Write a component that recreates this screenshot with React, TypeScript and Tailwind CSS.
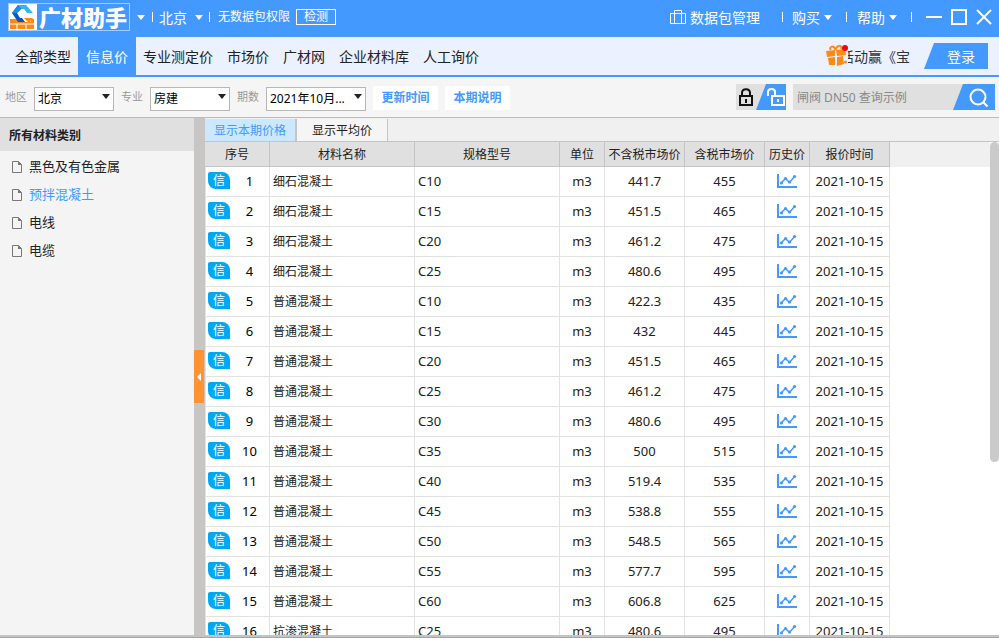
import clsx from "clsx";

interface Material {
  name: string;
  spec: string;
  net: string;
  gross: string;
}

const navItems = ["全部类型", "信息价", "专业测定价", "市场价", "广材网", "企业材料库", "人工询价"];

const categories = ["黑色及有色金属", "预拌混凝土", "电线", "电缆"];

const columns = [
  { title: "序号", width: "w-[65px]" },
  { title: "材料名称", width: "w-[145px]" },
  { title: "规格型号", width: "w-[145px]" },
  { title: "单位", width: "w-[45px]" },
  { title: "不含税市场价", width: "w-[80px]" },
  { title: "含税市场价", width: "w-[80px]" },
  { title: "历史价", width: "w-[45px]" },
  { title: "报价时间", width: "w-[80px]" },
];

const materials: Material[] = [
  { name: "细石混凝土", spec: "C10", net: "441.7", gross: "455" },
  { name: "细石混凝土", spec: "C15", net: "451.5", gross: "465" },
  { name: "细石混凝土", spec: "C20", net: "461.2", gross: "475" },
  { name: "细石混凝土", spec: "C25", net: "480.6", gross: "495" },
  { name: "普通混凝土", spec: "C10", net: "422.3", gross: "435" },
  { name: "普通混凝土", spec: "C15", net: "432", gross: "445" },
  { name: "普通混凝土", spec: "C20", net: "451.5", gross: "465" },
  { name: "普通混凝土", spec: "C25", net: "461.2", gross: "475" },
  { name: "普通混凝土", spec: "C30", net: "480.6", gross: "495" },
  { name: "普通混凝土", spec: "C35", net: "500", gross: "515" },
  { name: "普通混凝土", spec: "C40", net: "519.4", gross: "535" },
  { name: "普通混凝土", spec: "C45", net: "538.8", gross: "555" },
  { name: "普通混凝土", spec: "C50", net: "548.5", gross: "565" },
  { name: "普通混凝土", spec: "C55", net: "577.7", gross: "595" },
  { name: "普通混凝土", spec: "C60", net: "606.8", gross: "625" },
  { name: "抗渗混凝土", spec: "C25", net: "480.6", gross: "495" },
];

function Caret({ className }: { className?: string }) {
  return (
    <svg className={clsx("h-[5px] w-2 shrink-0", className)} viewBox="0 0 8 5" aria-hidden="true">
      <path d="M0 0h8L4 5z" fill="currentColor" />
    </svg>
  );
}

function Divider() {
  return <span className="h-[10px] w-px shrink-0 bg-white" />;
}

function LogoMark() {
  return (
    <svg className="h-[26px] w-7 shrink-0 bg-white" viewBox="0 0 28 26" aria-hidden="true">
      <path d="M1 15h24v10H1z" fill="#fb8a12" />
      <path d="M1 20h25M8 20v5M17 20v5" stroke="#fff" />
      <path d="M8 6h9l5 6v6h-8l-7-5z" fill="#fff" />
      <path d="M9 1h8l7 8h-6l-3-4h-4z" fill="#2fb8f5" />
      <path d="M9 1 3 9l6 9h7l-3-4h-2l-3-5 4-4z" fill="#0c55c4" />
      <path d="M9 1 3 9h5l4-4z" fill="#1c8cf0" />
      <path d="M15 14h9l-4 5z" fill="#fb8a12" />
    </svg>
  );
}

function BriefcaseIcon() {
  return (
    <svg className="h-4 w-4" viewBox="0 0 16 16" fill="none" stroke="currentColor" aria-hidden="true">
      <path d="M.5 4.500h15v10H.5zM4.500 14.500v-13h7v13" />
    </svg>
  );
}

function GiftIcon() {
  return (
    <svg className="h-[22px] w-[22px] shrink-0" viewBox="0 0 22 22" aria-hidden="true">
      <g fill="#ff8b17">
        <path d="M0 6 9 5v6l-8 1zM10 5l9-1 1 6-9 1zM2 13l7-1v8l-6 0zM11 12l6-1 1 8-7 2z" />
        <circle cx="19.500" cy="17" r="1.500" />
      </g>
      <path d="M9.500 5C8 0 3 1 4.500 5M9.500 5c2-6 7-5 5.500-1" fill="none" stroke="#ff8b17" strokeWidth="2" />
      <circle cx="19" cy="3" r="3" fill="#f00" />
    </svg>
  );
}

function FileIcon() {
  return (
    <svg className="h-3 w-[11px] shrink-0" viewBox="0 0 11 12" aria-hidden="true">
      <path d="M.5.5h6l3 3v8h-9z" fill="none" stroke="#777" />
      <path d="M6 0v4h4z" fill="#777" />
    </svg>
  );
}

function ChartIcon() {
  return (
    <svg className="h-[15px] w-5" viewBox="0 0 20 15" fill="none" stroke="#4499ff" aria-hidden="true">
      <path d="M1 0v13h19" strokeWidth="2" />
      <path d="M4 9 8.500 4.500l4 4L18 2" strokeWidth="1.500" />
      <g fill="#4499ff" stroke="none">
        <circle cx="4.500" cy="9" r="1.600" />
        <circle cx="8.500" cy="4.500" r="1.600" />
        <circle cx="12.500" cy="8" r="1.600" />
        <circle cx="17.500" cy="2.500" r="1.600" />
      </g>
    </svg>
  );
}

function TitleBar() {
  return (
    <header className="flex h-[37px] shrink-0 items-center justify-between bg-[#4499ff] pb-[3px] text-white">
      <div className="flex items-center pl-2">
        <div className="flex items-center border border-white/50">
          <LogoMark />
          <span className="w-[92px] text-center text-[22px] leading-6 font-black">广材助手</span>
        </div>
        <Caret className="mx-[7px]" />
        <Divider />
        <button className="flex items-center gap-2 px-[6px] text-[14px]">
          北京
          <Caret />
        </button>
        <Divider />
        <span className="pl-2 text-[12px]">无数据包权限</span>
        <button className="ml-[6px] h-4 w-10 border border-white text-[12px] leading-3">检测</button>
      </div>
      <div className="flex items-center pr-[7px] text-[14px]">
        <button className="flex items-center gap-1">
          <BriefcaseIcon />
          数据包管理
        </button>
        <span className="w-[22px]" />
        <Divider />
        <button className="flex items-center gap-1 pr-[10px] pl-[9px]">
          购买
          <Caret />
        </button>
        <span className="w-1" />
        <Divider />
        <button className="flex items-center gap-1 px-[10px]">
          帮助
          <Caret />
        </button>
        <span className="w-1" />
        <Divider />
        <div className="flex items-center gap-[9px] pl-[14px]">
          <button aria-label="最小化">
            <svg className="h-4 w-4" viewBox="0 0 16 16">
              <path d="M0 8h16" stroke="#fff" strokeWidth="2" />
            </svg>
          </button>
          <button aria-label="最大化">
            <svg className="h-4 w-4" viewBox="0 0 16 16">
              <path d="M1 1h14v14H1z" fill="none" stroke="#fff" strokeWidth="2" />
            </svg>
          </button>
          <button aria-label="关闭">
            <svg className="h-4 w-4" viewBox="0 0 16 16">
              <path d="m1 1 14 14M15 1 1 15" stroke="#fff" strokeWidth="2" />
            </svg>
          </button>
        </div>
      </div>
    </header>
  );
}

function NavBar() {
  return (
    <nav className="flex h-10 shrink-0 justify-between border-b-2 border-[#4499ff] bg-[#ebf1ff]">
      <div className="flex pl-2 text-[14px]">
        {navItems.map((item) => (
          <a
            key={item}
            href="#"
            className={clsx(
              "flex items-center pt-px",
              item === "信息价" ? "bg-[#4499ff] px-2 text-white" : "px-[7px] text-[#222]",
            )}
          >
            {item}
          </a>
        ))}
      </div>
      <div className="flex items-center pr-[11px]">
        <GiftIcon />
        <a href="#" className="flex w-[62px] justify-end overflow-hidden text-[14px] whitespace-nowrap text-[#333]">
          活动赢《宝
        </a>
        <button className="ml-[14px] h-[26px] w-16 bg-[#4499ff] pl-[10px] text-[14px] text-white [clip-path:polygon(10px_0,100%_0,100%_100%,0_100%)]">
          登录
        </button>
      </div>
    </nav>
  );
}

interface FilterProps {
  id: string;
  label: string;
  value: string;
  width: string;
}

function Filter({ id, label, value, width }: FilterProps) {
  return (
    <div className="flex items-center gap-[7px]">
      <label htmlFor={id} className="text-[11px] text-[#999]">
        {label}
      </label>
      <div className={clsx("relative", width)}>
        <select id={id} className="h-6 w-full appearance-none border border-[#b8b8b8] bg-white pl-[3px] text-[12px] text-black">
          <option>{value}</option>
        </select>
        <Caret className="pointer-events-none absolute top-[9px] right-1 text-[#222]" />
      </div>
    </div>
  );
}

function Toolbar() {
  return (
    <div className="flex h-[41px] shrink-0 items-center justify-between border-b border-[#bbb] bg-[#f5f5f5] pr-1 pl-[5px]">
      <div className="flex items-center gap-[7px] pt-px">
        <Filter id="region" label="地区" value="北京" width="w-20" />
        <Filter id="major" label="专业" value="房建" width="w-20" />
        <Filter id="period" label="期数" value="2021年10月..." width="w-[100px]" />
        <button className="h-6 w-[65px] bg-white text-[12px] font-bold text-[#4499ff]">更新时间</button>
        <button className="h-6 w-[65px] bg-white text-[12px] font-bold text-[#4499ff]">本期说明</button>
      </div>
      <div className="flex items-center gap-[7px]">
        <button aria-label="锁定">
          <svg className="h-[26px] w-[50px] bg-[#e0e0e0]" viewBox="0 0 50 26">
            <path d="M30 0h20v26H20z" fill="#4499ff" />
            <g fill="none" stroke="#111" strokeWidth="2">
              <path d="M4 12h12v9H4z" />
              <path d="M6 12V9c0-5 8-5 8 0v3M10 15v4" />
            </g>
            <g fill="none" stroke="#fff" strokeWidth="2">
              <path d="M36 12h12v9H36z" />
              <path d="M32 12V8c0-4 7-4 7 0v4M42 15v3" />
            </g>
          </svg>
        </button>
        <div className="flex h-[26px]">
          <input
            aria-label="查询材料"
            placeholder="闸阀 DN50 查询示例"
            className="w-[160px] bg-[#e0e0e0] pt-px pl-1 text-[12px] placeholder:text-[#888]"
          />
          <button aria-label="查询" className="bg-[#e0e0e0]">
            <svg className="h-[26px] w-[42px]" viewBox="0 0 42 26" fill="none">
              <path d="M10 0h32v26H0z" fill="#4499ff" />
              <circle cx="25" cy="13" r="7.500" stroke="#fff" strokeWidth="2" />
              <path d="m30.500 18.500 4 4" stroke="#fff" strokeWidth="2" />
            </svg>
          </button>
        </div>
      </div>
    </div>
  );
}

function Sidebar() {
  return (
    <aside className="w-[194px] shrink-0 bg-[#f4f4f4]">
      <h2 className="flex h-[33px] items-center bg-[#e0e0e0] pt-[2px] pl-[9px] text-[12px] font-bold text-[#222]">
        所有材料类别
      </h2>
      <ul className="pt-[2px] text-[13px]">
        {categories.map((category) => (
          <li key={category}>
            <a
              href="#"
              className={clsx(
                "flex h-7 items-center gap-[6px] pl-3",
                category === "预拌混凝土" ? "text-[#4499ff]" : "text-[#222]",
              )}
            >
              <FileIcon />
              {category}
            </a>
          </li>
        ))}
      </ul>
    </aside>
  );
}

function PriceTable() {
  return (
    <table className="w-[685px] table-fixed border-separate border-spacing-0 text-[#222]">
      <thead>
        <tr className="h-[25px] text-[12px]">
          {columns.map((column) => (
            <th
              key={column.title}
              className={clsx(
                "border-r border-b border-[#c4c4c4] bg-[#e0e0e0] p-0 pt-[2px] leading-[22px] font-normal whitespace-nowrap",
                column.width,
              )}
            >
              {column.title}
            </th>
          ))}
        </tr>
      </thead>
      <tbody className="text-center text-[13px] leading-5 [&_td]:border-r [&_td]:border-b [&_td]:border-[#e2e2e2]">
        {materials.map((row, index) => (
          <tr key={index} className="h-[30px]">
            <td className="border-l p-0 pb-[2px]">
              <div className="flex items-center pl-[2px] text-black">
                <span className="h-[17px] w-[22px] shrink-0 rounded-tl-xs rounded-tr-lg rounded-bl-lg bg-[#00a8f3] pt-px text-[12px] leading-4 text-white">
                  信
                </span>
                <span className="flex-1">{index + 1}</span>
              </div>
            </td>
            <td className="p-0 pt-px pl-[3px] text-left text-[12px]">{row.name}</td>
            <td className="p-0 pb-[2px] pl-[3px] text-left">{row.spec}</td>
            <td className="p-0 pb-[2px]">m3</td>
            <td className="p-0 pb-[2px]">{row.net}</td>
            <td className="p-0 pb-[2px]">{row.gross}</td>
            <td className="p-0">
              <div className="flex justify-center">
                <ChartIcon />
              </div>
            </td>
            <td className="p-0 pb-[2px] whitespace-nowrap">2021-10-15</td>
          </tr>
        ))}
      </tbody>
    </table>
  );
}

export default function App() {
  return (
    <div className="flex h-screen flex-col overflow-hidden bg-white font-['Noto_Sans','Noto_Sans_CJK_SC',sans-serif]">
      <TitleBar />
      <NavBar />
      <Toolbar />
      <main className="flex min-h-0 flex-1">
        <Sidebar />
        <div className="flex w-[11px] shrink-0 items-center bg-[#c8c6c5]">
          <button aria-label="收起" className="flex h-[53px] w-[10px] items-center justify-center bg-[#ff9232]">
            <svg className="h-2 w-1" viewBox="0 0 4 8">
              <path d="M4 0v8L0 4z" fill="#fff" />
            </svg>
          </button>
        </div>
        <section className="flex min-w-0 flex-1 flex-col">
          <div className="flex h-6 shrink-0 border-b border-[#c4c4c4] bg-[#f0f0f0] pt-px text-[12px]">
            <button className="w-[92px] border-r-2 border-[#c4c4c4] bg-[#cce8ff] pt-px text-[#4499ff]">显示本期价格</button>
            <button className="w-[91px] border-r border-[#c4c4c4] bg-[#f5f5f5] pt-[2px] text-[#222]">显示平均价</button>
          </div>
          <div className="flex min-h-0 flex-1">
            <div className="min-w-0 flex-1 overflow-hidden">
              <div className="bg-linear-to-b from-[#f0f0f0] from-[25px] to-white to-[25px]">
                <PriceTable />
              </div>
            </div>
            <div className="w-[9px] shrink-0">
              <div className="h-[65%] rounded-full bg-[#cacaca]" />
            </div>
          </div>
        </section>
      </main>
      <div className="h-[3px] shrink-0 border-b border-[#a5a5a5] bg-[#c4c4c4]" />
    </div>
  );
}
